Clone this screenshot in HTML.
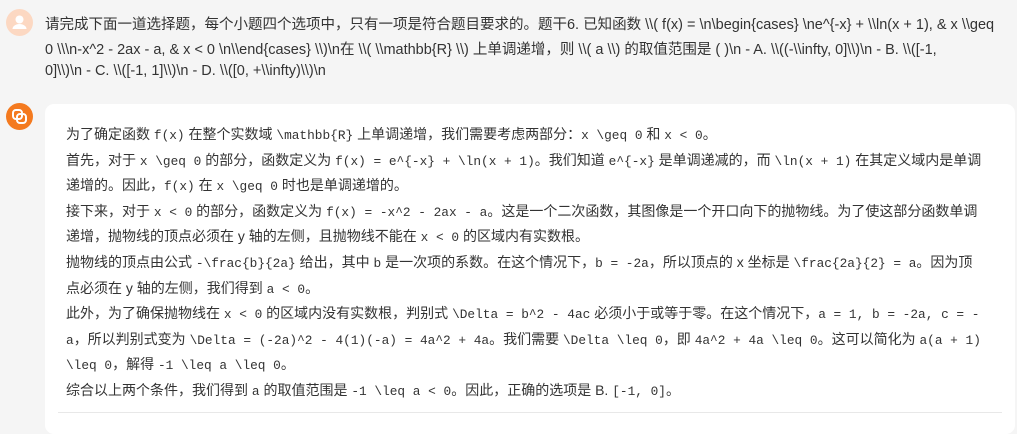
<!DOCTYPE html>
<html><head><meta charset="utf-8"><style>
body{margin:0;width:1017px;height:420px;background:#f5f5f5;position:relative;overflow:hidden;font-family:"Liberation Sans","Noto Sans CJK SC",sans-serif;color:#333;}
.q{position:absolute;left:45px;font-size:14.5px;white-space:nowrap;color:#333;}
.card{position:absolute;left:45px;top:104px;width:970px;height:330px;background:#fff;border-radius:9px;}
.l{position:absolute;left:66px;font-size:14px;white-space:nowrap;color:#333;}
code{font-family:"Liberation Mono","DejaVu Sans Mono",monospace;font-size:12.8px;}
.av{position:absolute;left:6px;width:27px;height:27px;border-radius:50%;}
.hr{position:absolute;left:58px;top:412px;width:944px;height:1px;background:#e8e8e8;}
</style></head><body>
<div class="av" style="top:9px;background:#fcd8c2"><svg width="27" height="27"><circle cx="13.5" cy="10.5" r="4" fill="#fff"/><path d="M6.5 20 a7 5 0 0 1 14 0z" fill="#fff"/></svg></div>
<div class="q" style="top:13px">请完成下面一道选择题，每个小题四个选项中，只有一项是符合题目要求的。题干6. 已知函数 \\( f(x) = \n\begin{cases} \ne^{-x} + \\ln(x + 1), &amp; x \\geq</div>
<div class="q" style="top:38px">0 \\\n-x^2 - 2ax - a, &amp; x &lt; 0 \n\\end{cases} \\)\n在 \\( \\mathbb{R} \\) 上单调递增，则 \\( a \\) 的取值范围是 ( )\n - A. \\((-\\infty, 0]\\)\n - B. \\([-1,</div>
<div class="q" style="top:63px">0]\\)\n - C. \\([-1, 1]\\)\n - D. \\([0, +\\infty)\\)\n</div>
<div class="av" style="top:103px;background:#f47a1f"><svg width="27" height="27"><g fill="none" stroke="#fff" stroke-width="2"><rect x="7" y="7" width="9" height="9" rx="3"/><rect x="11" y="11" width="9" height="9" rx="3"/></g></svg></div>
<div class="card"></div>
<div class="l" style="top:124px">为了确定函数 <code>f(x)</code> 在整个实数域 <code>\mathbb{R}</code> 上单调递增，我们需要考虑两部分：<code>x \geq 0</code> 和 <code>x &lt; 0</code>。</div>
<div class="l" style="top:150px">首先，对于 <code>x \geq 0</code> 的部分，函数定义为 <code>f(x) = e^{-x} + \ln(x + 1)</code>。我们知道 <code>e^{-x}</code> 是单调递减的，而 <code>\ln(x + 1)</code> 在其定义域内是单调</div>
<div class="l" style="top:175px">递增的。因此，<code>f(x)</code> 在 <code>x \geq 0</code> 时也是单调递增的。</div>
<div class="l" style="top:201px">接下来，对于 <code>x &lt; 0</code> 的部分，函数定义为 <code>f(x) = -x^2 - 2ax - a</code>。这是一个二次函数，其图像是一个开口向下的抛物线。为了使这部分函数单调</div>
<div class="l" style="top:226px">递增，抛物线的顶点必须在 y 轴的左侧，且抛物线不能在 <code>x &lt; 0</code> 的区域内有实数根。</div>
<div class="l" style="top:252px">抛物线的顶点由公式 <code>-\frac{b}{2a}</code> 给出，其中 <code>b</code> 是一次项的系数。在这个情况下，<code>b = -2a</code>，所以顶点的 x 坐标是 <code>\frac{2a}{2} = a</code>。因为顶</div>
<div class="l" style="top:278px">点必须在 y 轴的左侧，我们得到 <code>a &lt; 0</code>。</div>
<div class="l" style="top:303px">此外，为了确保抛物线在 <code>x &lt; 0</code> 的区域内没有实数根，判别式 <code>\Delta = b^2 - 4ac</code> 必须小于或等于零。在这个情况下，<code>a = 1, b = -2a, c = -</code></div>
<div class="l" style="top:329px"><code>a</code>，所以判别式变为 <code>\Delta = (-2a)^2 - 4(1)(-a) = 4a^2 + 4a</code>。我们需要 <code>\Delta \leq 0</code>，即 <code>4a^2 + 4a \leq 0</code>。这可以简化为 <code>a(a + 1)</code></div>
<div class="l" style="top:354px"><code>\leq 0</code>，解得 <code>-1 \leq a \leq 0</code>。</div>
<div class="l" style="top:380px">综合以上两个条件，我们得到 <code>a</code> 的取值范围是 <code>-1 \leq a &lt; 0</code>。因此，正确的选项是 B. <code>[-1, 0]</code>。</div>
<div class="hr"></div>
</body></html>
